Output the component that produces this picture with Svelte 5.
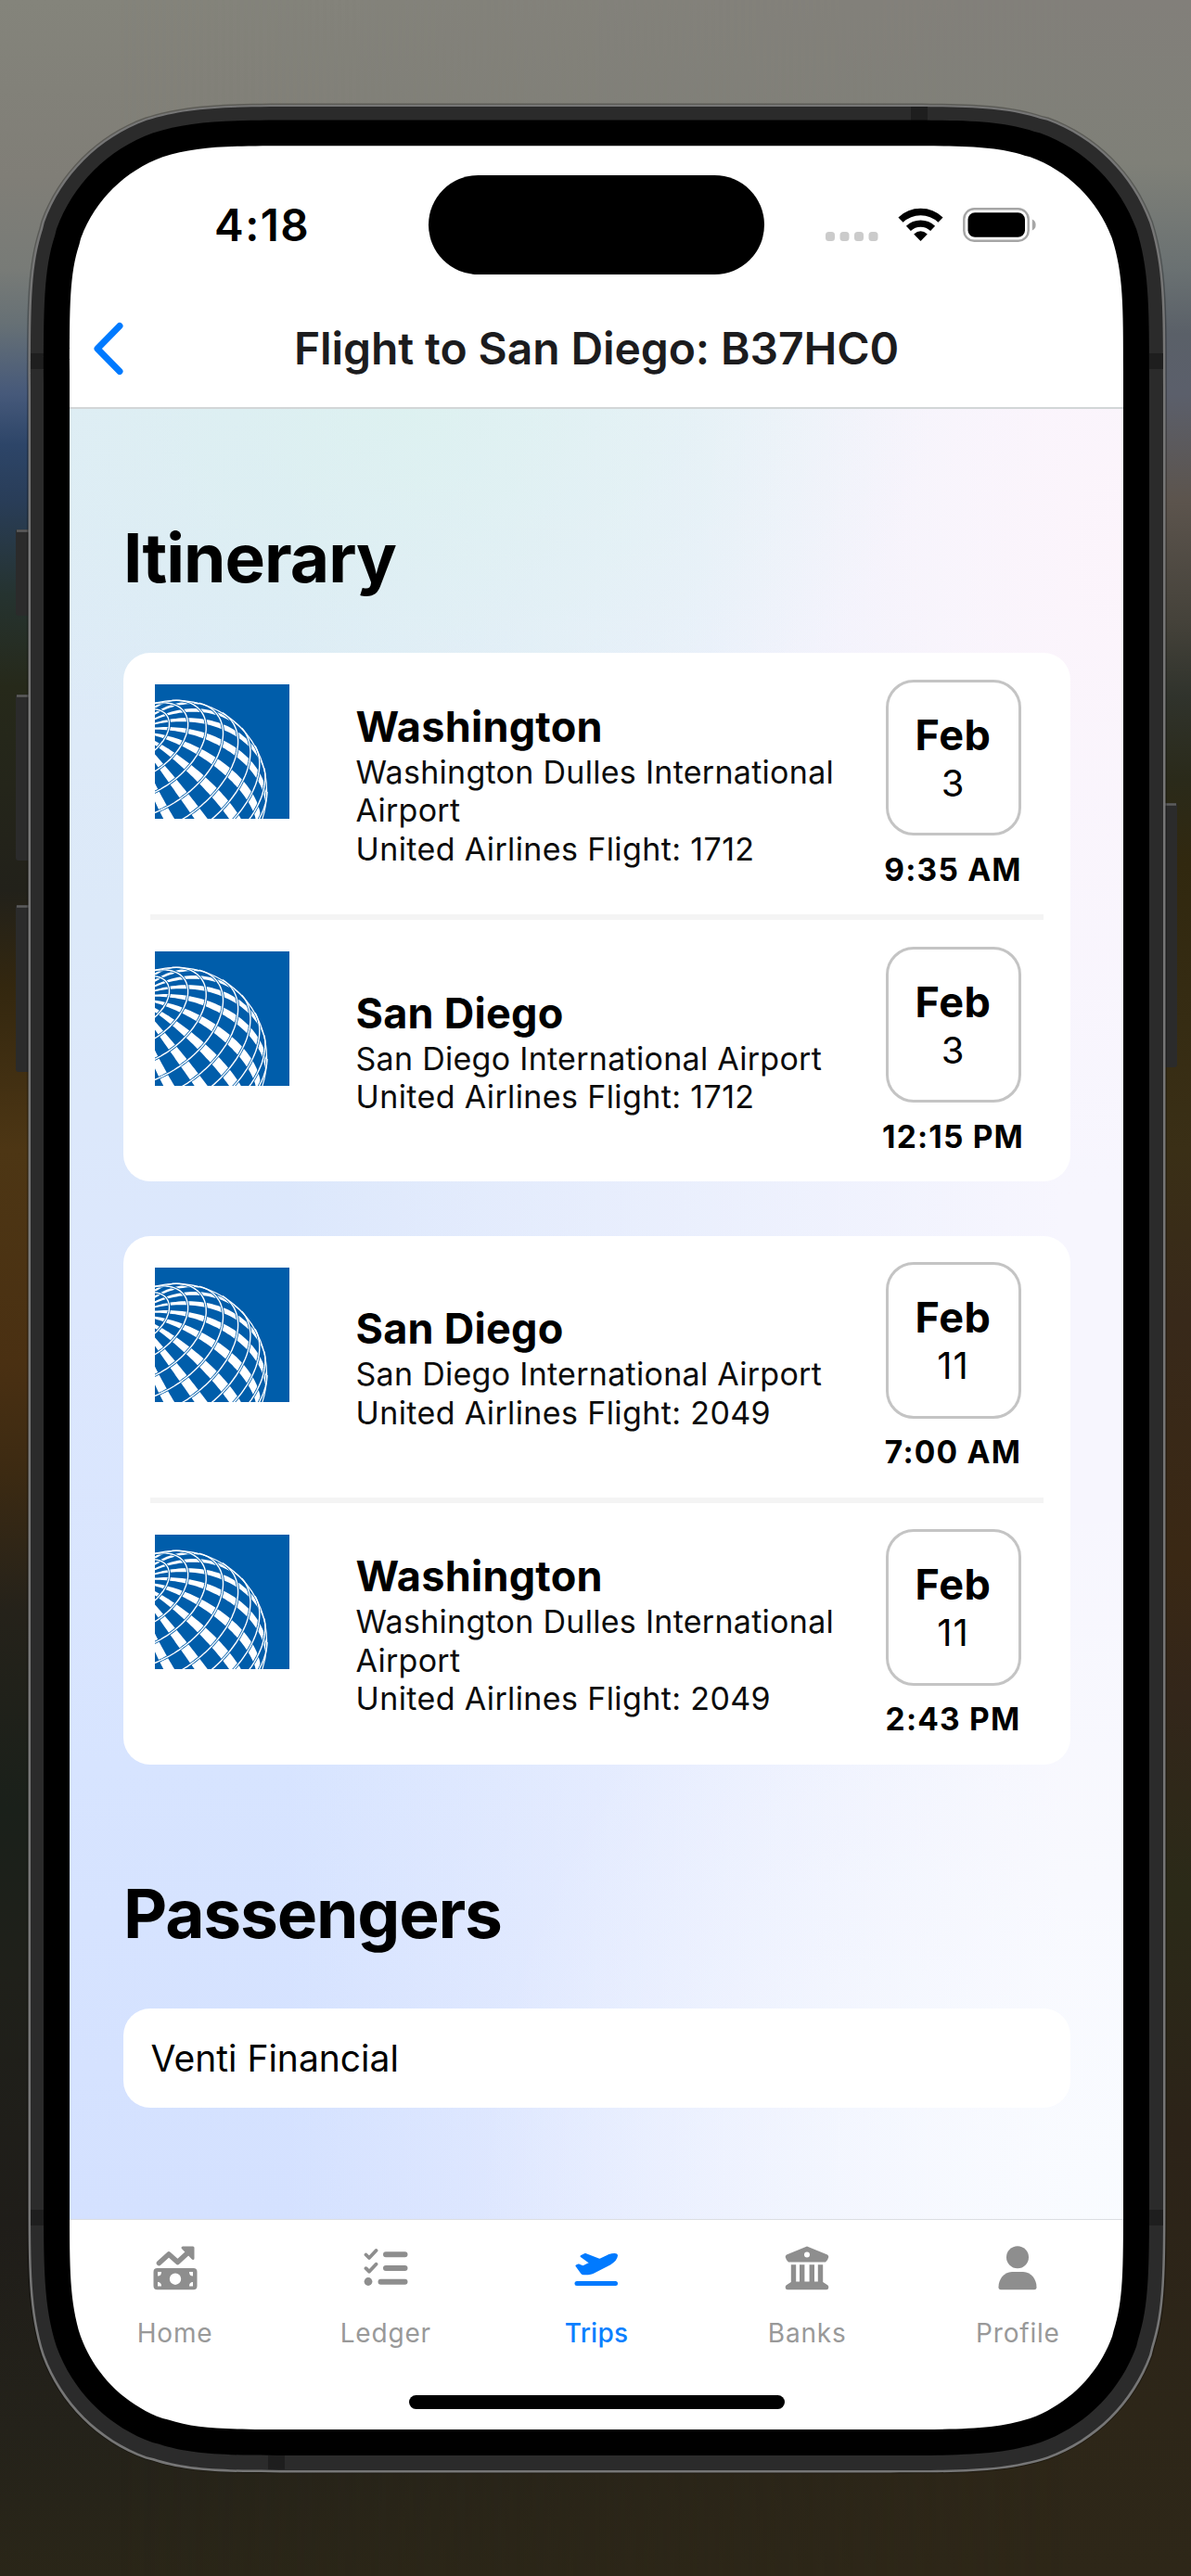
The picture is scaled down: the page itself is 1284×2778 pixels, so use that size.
<script>
  const trips = [
    [
      { city: 'Washington', airport: 'Washington Dulles International Airport', flight: '1712', day: '3', time: '9:35 AM' },
      { city: 'San Diego', airport: 'San Diego International Airport', flight: '1712', day: '3', time: '12:15 PM' }
    ],
    [
      { city: 'San Diego', airport: 'San Diego International Airport', flight: '2049', day: '11', time: '7:00 AM' },
      { city: 'Washington', airport: 'Washington Dulles International Airport', flight: '2049', day: '11', time: '2:43 PM' }
    ]
  ];
  const tabs = ['Home', 'Ledger', 'Trips', 'Banks', 'Profile'];

  // Rounded rectangle with continuous-curvature corners
  function squircle(x, y, w, h, r) {
    const corner = [
      [1.52866, 0], [1.08849, 0], [0.86841, 0], [0.66993, 0.0655], [0.63149, 0.07491],
      [0.37282, 0.16906], [0.16906, 0.37282], [0.07491, 0.63149], [0, 0.86841], [0, 1.08849], [0, 1.52866]
    ].map(([a, b]) => [a * r, b * r]);
    const maps = [
      (a, b) => [x + w - a, y + b],
      (a, b) => [x + w - b, y + h - a],
      (a, b) => [x + a, y + h - b],
      (a, b) => [x + b, y + a]
    ];
    let d = '';
    maps.forEach((m, i) => {
      const p = corner.map(([a, b]) => m(a, b).map((v) => v.toFixed(1)).join(' '));
      d += `${i ? 'L' : 'M'}${p[0]}C${p[1]} ${p[2]} ${p[3]}L${p[4]}C${p[5]} ${p[6]} ${p[7]}C${p[8]} ${p[9]} ${p[10]}`;
    });
    return d + 'Z';
  }

  // Orthographic globe: alternating meridian bars crossed by thin parallels
  function globe(pole, centre, R) {
    const px = (pole[0] - centre[0]) / R;
    const py = (pole[1] - centre[1]) / R;
    const d = Math.hypot(px, py);
    const p = [px, py, Math.sqrt(1 - d * d)];
    const a = [-py / d, px / d, 0];
    const b = [p[1] * a[2] - p[2] * a[1], p[2] * a[0] - p[0] * a[2], p[0] * a[1] - p[1] * a[0]];
    const D = Math.PI / 180;
    const pt = (th, ph) => {
      const s = Math.sin(th * D), c = Math.cos(th * D);
      const v = [0, 1, 2].map((i) => c * p[i] + s * (Math.cos(ph * D) * a[i] + Math.sin(ph * D) * b[i]));
      return [centre[0] + R * v[0], centre[1] + R * v[1], v[2]];
    };
    const str = (q) => q[0].toFixed(1) + ' ' + q[1].toFixed(1);
    let lines = '';
    let bars = '';
    for (let th = 11.8; th < 150; th += 11.8) {
      let pen = false;
      for (let ph = 0; ph <= 360; ph += 2) {
        const q = pt(th, ph);
        if (q[2] < 0) { pen = false; continue; }
        lines += (pen ? 'L' : 'M') + str(q);
        pen = true;
      }
    }
    for (let ph = -2.5; ph < 357; ph += 18) {
      const l = [];
      const r = [];
      for (let th = 4; th < 160; th += 2) {
        const q1 = pt(th, ph - 3.4);
        const q2 = pt(th, ph + 3.4);
        if (q1[2] < 0 || q2[2] < 0) break;
        l.push(q1);
        r.unshift(q2);
      }
      if (l.length > 1) bars += 'M' + [...l, ...r].map(str).join('L') + 'Z';
    }
    return { lines, bars };
  }
  const g = globe([-23, 51], [23, 115], 98);
</script>

<div class="stage">
  <svg class="device" viewBox="0 0 1284 2778" aria-hidden="true">
    <path d="M32 571H19q-2 0-2 2v88q0 3 3 3h12zM32 749H19q-2 0-2 2v174q0 3 3 3h12zM32 976H19q-2 0-2 2v175q0 3 3 3h12zM1254 866h13q2 0 2 2v280q0 3-3 3h-12z" fill="#2b2b2b" />
    <path d="M18 572.500h14M18 750.500h14M18 977.500h14M1255 867.500h13" stroke="#5c5c5c" stroke-width="2.500" />
    <path d={squircle(29, 111.5, 1229, 2556, 202)} fill="#000" opacity="0.28" />
    <path d={squircle(30.5, 113, 1226, 2553.5, 200)} fill="#767676" />
    <path d={squircle(33, 115, 1221, 2549, 198)} fill="#2b2b2b" />
    <path d="M33 381h14v17H33zM1239 381h15v17h-15zM33 2383h14v17H33zM1239 2383h15v17h-15zM982 115h18v15h-18zM289 2648h18v15h-18z" fill="#1e1e1e" />
    <path d={squircle(47, 129.5, 1192, 2518.5, 186)} fill="#000" />
    <path d={squircle(75, 157.3, 1136, 2462.7, 159)} fill="#fff" />
  </svg>

  <div class="screen">
    <header>
      <div class="status">
        <span class="clock">4:18</span>
        <span class="island"></span>
        <div class="indicators">
          <svg width="57" height="10" viewBox="0 0 57 10" class="dots">
            {#each [0, 15.5, 31, 46.5] as x}<rect {x} width="10" height="10" rx="3.5" fill="#cbcbcb" />{/each}
          </svg>
          <svg width="49" height="37" viewBox="0 0 49 37" class="wifi">
            <path d="M3 13.2A31 31 0 0 1 46 13.2" fill="none" stroke="#000" stroke-width="7.4" />
            <path d="M11.4 22.4A19 19 0 0 1 37.6 22.4" fill="none" stroke="#000" stroke-width="7.2" />
            <path d="M24.5 36L17.2 28.6Q24.5 22 31.8 28.6Z" />
          </svg>
          <svg width="79" height="37" viewBox="0 0 79 37" class="battery">
            <rect x="1.3" y="1.3" width="69.4" height="34.4" rx="11" fill="none" stroke="#a6a6a6" stroke-width="2.4" />
            <rect x="5.5" y="5.3" width="61.5" height="26.4" rx="7.5" />
            <path d="M74.8 12.5Q78.6 14 78.6 18.5Q78.6 23 74.8 24.5Z" fill="#a6a6a6" />
          </svg>
        </div>
      </div>
      <div class="nav">
        <svg class="back" width="34" height="58" viewBox="0 0 34 58"><path d="M29 4.5L5 29L29 53.5" fill="none" stroke="#007aff" stroke-width="7" stroke-linecap="round" stroke-linejoin="round" /></svg>
        <h1>Flight to San Diego: B37HC0</h1>
      </div>
    </header>

    <main>
      <h2 class="itinerary">Itinerary</h2>
      <div class="legs">
        {#each trips as trip}
          <section class="card">
            {#each trip as leg}
              <article>
                <svg class="logo" width="145" height="145" viewBox="0 0 145 145">
                  <rect width="145" height="145" fill="#005daa" />
                  <path d={g.bars} fill="#fff" />
                  <path d={g.lines} fill="none" stroke="#005daa" stroke-width="3" />
                  <path d={g.lines} fill="none" stroke="#fff" stroke-width="1.4" />
                  <circle cx="23" cy="115" r="97.6" fill="none" stroke="#fff" stroke-width="1.2" />
                </svg>
                <div class="info">
                  <h3>{leg.city}</h3>
                  <p>{leg.airport}</p>
                  <p class="flight">United Airlines Flight: {leg.flight}</p>
                </div>
                <div class="when">
                  <div class="date"><b>Feb</b><span>{leg.day}</span></div>
                  <strong>{leg.time}</strong>
                </div>
              </article>
            {/each}
          </section>
        {/each}
      </div>
      <h2 class="passengers">Passengers</h2>
      <div class="card person">Venti Financial</div>
    </main>

    <nav class="tabs">
      {#each tabs as tab}
        <div class="tab" class:active={tab === 'Trips'}>
          <svg width="48" height="48" viewBox="0 0 48 48">
            {#if tab === 'Home'}
              <path fill-rule="evenodd" d="M4 24H43.500Q47.500 24 47.500 28V43Q47.500 47.300 43.500 47.300H4.500Q.500 47.300 .500 43V28Q.500 24 4.500 24ZM24 29.500a6.200 6.200 0 1 0 0 12.400a6.200 6.200 0 1 0 0-12.400ZM5 28V32.500Q9 32.500 9 28ZM43 28V32.500Q39 32.500 39 28ZM5 43.500V39Q9 39 9 43.500ZM43 43.500V39Q39 39 39 43.500Z" />
              <path d="M6.500 18.500L17 9L26.500 17.500L38.500 6.500" fill="none" stroke="currentColor" stroke-width="5.600" stroke-linecap="round" stroke-linejoin="round" />
              <path d="M32 2H43V13.500Z" stroke="currentColor" stroke-width="3" stroke-linejoin="round" />
            {:else if tab === 'Ledger'}
              <path d="M24 9.300H44.500M24 24H44.500M18.500 38.700H44.500" stroke="currentColor" stroke-width="6" stroke-linecap="round" />
              <path d="M2.500 9.500L6 13L13.500 5M2.500 24.200L6 27.700L13.500 19.700" fill="none" stroke="currentColor" stroke-width="3.800" stroke-linecap="round" stroke-linejoin="round" />
              <circle cx="5" cy="38.500" r="4.400" />
            {:else if tab === 'Trips'}
              <path d="M2.400 21.500L4.800 20.500L9.500 22.500L17.500 18.500L7.500 11.200L12 9L27.500 15L37 10.300Q45.500 7.600 46 10.500Q45.500 15.500 38.500 19.600L20 29.200Q18 30.200 15 30.200H9.800Q8.500 30.200 7.800 29Z" stroke="currentColor" stroke-width="2" stroke-linejoin="round" />
              <path d="M3 40.600H44.500" stroke="currentColor" stroke-width="5" stroke-linecap="round" />
            {:else if tab === 'Banks'}
              <path fill-rule="evenodd" d="M24 .500L46 9.500Q47.500 10.500 47.300 12Q46.500 15.500 44 17.500H4Q1.500 15.500 .700 12Q.500 10.500 2 9.500ZM24 6.600a3 3 0 1 0 0 6a3 3 0 1 0 0-6Z" />
              <path d="M6.800 20.300h5.400V38.500h3.800V20.300h5.400V38.500h5.200V20.300H32V38.500h3.800V20.300h5.400V39L46.500 42.500Q47.500 43.500 47.300 45Q47 47.300 45 47.300H3Q1 47.300 .700 45Q.500 43.500 1.500 42.500L6.800 39Z" />
            {:else}
              <circle cx="24" cy="12.200" r="12" />
              <path d="M18 28H30C39 28.500 44.500 36 44.500 44.500Q44.500 47.300 42 47.300H6Q3.500 47.300 3.500 44.500C3.500 36 9 28.500 18 28Z" />
            {/if}
          </svg>
          <span>{tab}</span>
        </div>
      {/each}
    </nav>
    <div class="home-indicator"></div>
  </div>
</div>

<style>
  :global(body) { margin: 0; }
  .stage {
    position: relative;
    box-sizing: border-box;
    width: 1284px;
    height: 2778px;
    padding: 157px 73px 158px 75px;
    overflow: hidden;
    font-family: Inter, 'Liberation Sans', sans-serif;
    color: #000;
    background: linear-gradient(#84847b 0, #807e77 190px, #787b77 290px, #667075 350px, #46597a 425px, #2d4568 480px, #293d58 540px, #253330 640px, #26291a 740px, #22211a 960px, #33270f 1063px, #4d3614 1240px, #4a3012 1470px, #3c2a12 1590px, #25221a 1736px, #1a201a 1950px, #1f201a 2125px, #1f1d19 2400px, #24221a 2620px, #2a2618 2778px);
  }
  .stage::before {
    content: '';
    position: absolute;
    inset: 0;
    background: linear-gradient(#827f7a 0, #7f8078 177px, #6a7172 290px, #5a6068 360px, #5b5f6b 425px, #5c544d 540px, #45423a 670px, #30332c 750px, #2a2a1a 840px, #31280f 930px, #3a2f16 1240px, #38291a 1420px, #3a2814 1680px, #33261a 1830px, #2b2a18 2040px, #2c2318 2300px, #2d2618 2600px, #2e2718 2778px);
    mask-image: linear-gradient(90deg, transparent 10%, #000 90%);
  }
  .device { position: absolute; inset: 0; width: 1284px; height: 2778px; }
  .screen { position: relative; display: flex; flex-direction: column; height: 2463px; }

  header { box-sizing: border-box; height: 284px; border-bottom: 2px solid #d2d6d7; }
  .status { display: flex; align-items: center; height: 171px; }
  .clock { box-sizing: border-box; width: 387px; padding-left: 156px; font-size: 47.500px; line-height: 58px; font-weight: 600; letter-spacing: 1.500px; }
  .island { width: 362px; height: 107px; border-radius: 54px; background: #000; }
  .indicators { display: flex; align-items: center; margin-left: 66px; }
  .dots { margin-top: 24px; }
  .wifi { margin-left: 20.500px; }
  .battery { margin-left: 21.500px; }
  .nav { display: flex; align-items: center; height: 95px; padding-left: 25px; }
  h1 { width: 1018px; margin: 0; font-size: 48px; line-height: 58px; font-weight: 600; letter-spacing: -0.100px; color: #1c1c1e; text-align: center; }

  main {
    box-sizing: border-box;
    height: 1952px;
    padding: 116.500px 57px 0 58px;
    background:
      radial-gradient(560px 420px at 32% 0%, rgba(219, 242, 238, 0.75), rgba(219, 242, 238, 0)),
      radial-gradient(460px 700px at 100% 8%, rgba(252, 244, 251, 0.95), rgba(252, 244, 251, 0)),
      radial-gradient(700px 800px at 100% 100%, rgba(249, 252, 255, 0.9), rgba(249, 252, 255, 0)),
      linear-gradient(90deg, rgba(247, 245, 254, 0) 20%, #f7f6fe 94%),
      linear-gradient(#dfecf6 0, #dce9f9 28%, #dce7fd 50%, #d7e4ff 75%, #d4e1ff 100%);
  }
  h2 { margin: 0 0 58.500px; font-size: 73px; line-height: 88px; font-weight: 700; }
  .itinerary { letter-spacing: -1px; }
  .passengers { margin-top: 117px; letter-spacing: -1.200px; }
  .legs { display: flex; flex-direction: column; gap: 58.500px; }
  .card { border-radius: 29px; background: #fff; }
  section.card { padding: 0 29px 0 28.500px; }
  article { display: flex; align-items: flex-start; height: 282px; padding-left: 5.500px; }
  article + article { border-top: 6px solid #f4f4f4; }
  .logo { margin-top: 34px; }
  .info { align-self: center; width: 540px; margin: 1px 0 0 71.500px; }
  h3 { margin: 0; font-size: 45px; line-height: 57px; font-weight: 700; letter-spacing: 0.250px; }
  p { margin: 0; font-size: 34px; line-height: 41.500px; letter-spacing: 0.280px; color: #0c0c0c; }
  .flight { letter-spacing: 0.380px; }
  .when { display: flex; flex-direction: column; align-items: center; width: 146px; margin: 28.500px 0 0 31px; white-space: nowrap; }
  .date { box-sizing: border-box; display: flex; flex-direction: column; align-items: center; width: 146px; height: 168.500px; padding-top: 30px; border: 3px solid #c4c4c4; border-radius: 30px; }
  .date b { font-size: 45px; line-height: 54px; font-weight: 700; letter-spacing: 0.600px; }
  .date span { font-size: 40px; line-height: 50px; letter-spacing: 1px; }
  strong { margin-top: 15.500px; font-size: 33.500px; line-height: 42px; font-weight: 700; letter-spacing: 1.200px; }
  .person { box-sizing: border-box; height: 107px; padding-left: 29.500px; font-size: 39px; line-height: 108px; }

  .tabs { display: flex; box-sizing: border-box; height: 190px; padding-top: 28px; border-top: 1px solid #dcdee2; }
  .tab { flex: 1; display: flex; flex-direction: column; align-items: center; gap: 29px; color: #8e8e8e; fill: currentColor; }
  .tab span { font-size: 28px; line-height: 34px; letter-spacing: 0.800px; color: #999; }
  .active { color: #007aff; }
  .tab.active span { font-weight: 500; letter-spacing: 0.200px; color: #0a80ff; }
  .home-indicator { align-self: center; width: 405px; height: 14.500px; border-radius: 8px; background: #000; }
</style>
